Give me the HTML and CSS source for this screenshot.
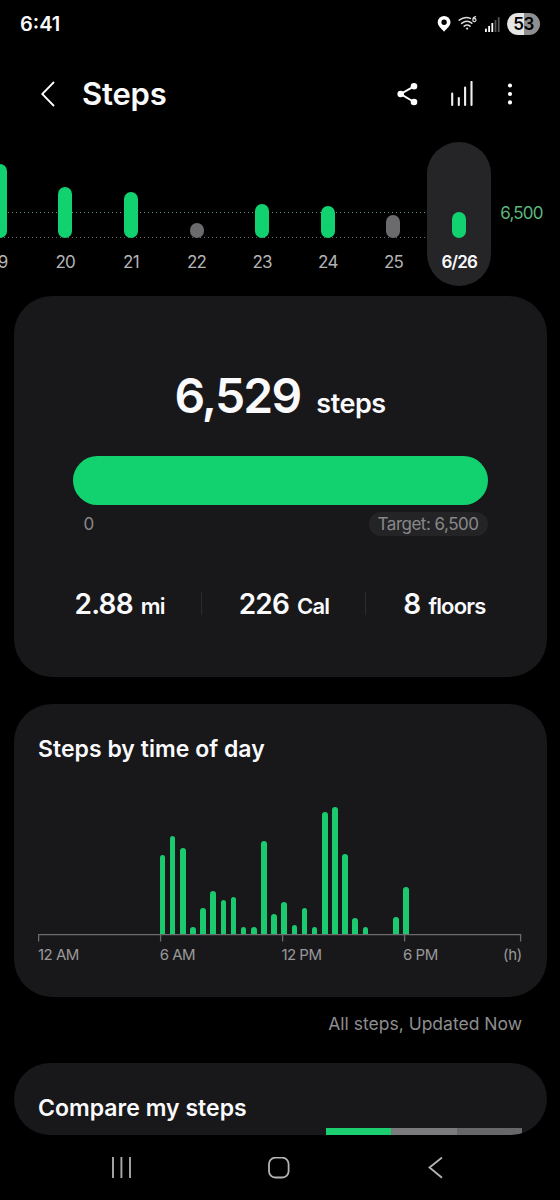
FILE: index.html
```html
<!DOCTYPE html>
<html lang="en">
    <head>
        <meta charset="UTF-8" />
        <meta name="viewport" content="width=device-width, initial-scale=1.0" />
        <title>Steps</title>
        <link rel="stylesheet" href="styles.css">
    </head>
    <body>
        <div class="status">
            <span class="clock">6:41</span>
            <svg class="status-icons" width="64" height="20" viewBox="0 0 64 20">
                <path fill="#fff" fill-rule="evenodd" d="M7.1 1.9a6.4 6.4 0 0 0-6.4 6.4c0 3.6 3.2 5.6 6.4 9.5 3.2-3.9 6.4-5.9 6.4-9.5a6.4 6.4 0 0 0-6.4-6.4zm0 3.6a2.7 2.7 0 1 1 0 5.4 2.7 2.7 0 0 1 0-5.4z" />
                <g fill="none" stroke="#ddd" stroke-width="1.5" stroke-linecap="round">
                    <path d="M22.2 6.2q5.6-4.4 11.2 -1.8" />
                    <path d="M24.6 9.4q5.4-4.2 10.2-.2" />
                    <path d="M27.2 12.2q3-2.2 5.8 0" />
                    <path d="M38.6 2.6q-2.8.6-2.8 3.4a1.6 1.7 0 1 0 1.6-1.7q-1 .1-1.5 1" stroke-width="1.2" />
                </g>
                <circle cx="30.1" cy="14.6" r="1.1" fill="#ddd" />
                <g fill="#fff">
                    <rect x="48" y="14.7" width="1.8" height="3.3" />
                    <rect x="51.2" y="12" width="1.8" height="6" />
                    <rect x="54.4" y="9" width="1.8" height="9" />
                    <rect x="57.6" y="6" width="1.8" height="12" fill="#555" />
                    <rect x="60.8" y="3.2" width="1.8" height="14.8" fill="#555" />
                </g>
            </svg>
            <span class="battery">53</span>
        </div>

        <div class="header">
            <svg class="back" width="14" height="26" viewBox="0 0 14 26">
                <path d="M13 1L1.2 13 13 25" fill="none" stroke="#fff" stroke-width="1.8" />
            </svg>
            <h1>Steps</h1>
            <svg width="22" height="24" viewBox="0 0 22 24">
                <path d="M17 4.4L3.7 12 17 20" fill="none" stroke="#fff" stroke-width="2" />
                <g fill="#fff">
                    <circle cx="17" cy="4.2" r="3.3" />
                    <circle cx="3.7" cy="12" r="3.3" />
                    <circle cx="17" cy="20" r="3.3" />
                </g>
            </svg>
            <svg class="trend" width="24" height="26" viewBox="0 0 24 26">
                <path d="M2.2 12.5v11.5M8.8 17v7M15.1 6.6v17.4M21.5 .9v23.1" stroke="#f0f0f0" stroke-width="2.1" stroke-linecap="round" />
            </svg>
            <svg class="more" width="6" height="24" viewBox="0 0 6 24">
                <g fill="#fff">
                    <circle cx="3" cy="3.5" r="2.1" />
                    <circle cx="3" cy="12" r="2.1" />
                    <circle cx="3" cy="20.4" r="2.1" />
                </g>
            </svg>
        </div>

        <div class="week">
            <div class="line goal"></div>
            <div class="line base"></div>
            <div class="days"></div>
            <span class="goal-label">6,500</span>
        </div>

        <div class="card summary">
            <div class="total"><b>6,529</b><span>steps</span></div>
            <div class="progress"></div>
            <div class="range">
                <span>0</span>
                <span class="target">Target: 6,500</span>
            </div>
            <ul class="stats">
                <li><b>2.88</b><span>mi</span></li>
                <li><b>226</b><span>Cal</span></li>
                <li><b>8</b><span>floors</span></li>
            </ul>
        </div>

        <div class="card time">
            <h2>Steps by time of day</h2>
            <div class="chart"></div>
            <svg class="axis" width="484" height="8" viewBox="0 0 484 8">
                <path d="M.6 7.5V.7H482.6V7.5M122.6 .7v6.8M244.6 .7v6.8M366.6 .7v6.8" fill="none" stroke="#6c6c6e" stroke-width="1.3" />
            </svg>
            <div class="hours">
                <span>12 AM</span>
                <span>6 AM</span>
                <span>12 PM</span>
                <span>6 PM</span>
                <em>(h)</em>
            </div>
        </div>
        <p class="updated">All steps, Updated Now</p>

        <div class="card compare">
            <h2>Compare my steps</h2>
            <div class="levels"><i></i><i></i><i></i></div>
        </div>

        <div class="nav">
            <svg width="22" height="22" viewBox="0 0 22 22">
                <path d="M3 0v21M11.4 0v21M20 0v21" stroke="#a9a9a9" stroke-width="1.9" />
            </svg>
            <svg width="22" height="22" viewBox="0 0 22 22">
                <rect x="1" y=".7" width="19.6" height="19.8" rx="6.2" fill="none" stroke="#b4b4b4" stroke-width="1.8" />
            </svg>
            <svg width="22" height="22" viewBox="0 0 22 22">
                <path d="M17 .5L4.5 10.5 17 20.8" fill="none" stroke="#b4b4b4" stroke-width="1.8" />
            </svg>
        </div>

        <script>
            // [label, bar height, goal reached]
            let days = [
                ["19", 74, true],
                ["20", 51, true],
                ["21", 46, true],
                ["22", 15, false],
                ["23", 34, true],
                ["24", 32, true],
                ["25", 23, false],
                ["6/26", 26, true]
            ]
            let week = document.querySelector(".days")
            days.forEach((d, i) => {
                let day = document.createElement("div")
                day.className = "day" + (d[2] ? "" : " missed") + (i === days.length - 1 ? " selected" : "")
                day.innerHTML = `<i style="height: ${d[1]}px"></i><span>${d[0]}</span>`
                week.appendChild(day)
            })

            // one bar per half hour, starting at midnight
            let steps = [
                0, 0, 0, 0, 0, 0, 0, 0, 0, 0, 0, 0,
                79, 98, 86, 7.5, 26.5, 43, 34, 37, 7.5, 7.5, 93, 20.5,
                32, 9, 26, 7.5, 122, 127, 80, 16, 7.5, 0, 0, 17,
                47
            ]
            let chart = document.querySelector(".chart")
            steps.forEach(h => {
                let bar = document.createElement("i")
                bar.style.height = h + "px"
                chart.appendChild(bar)
            })
        </script>
    </body>
</html>
```
FILE: styles.css
```css
* {
    margin: 0;
    padding: 0;
    box-sizing: border-box;
}
body {
    width: 560px;
    height: 1200px;
    overflow: hidden;
    background: #000;
    color: #fafafc;
    font-family: Inter, "Liberation Sans", sans-serif;
}
svg {
    display: block;
    flex: none;
}
h2 {
    font-size: 23px;
    font-weight: 600;
    line-height: 28px;
    letter-spacing: 0.03px;
    white-space: nowrap;
}
.status {
    height: 48px;
    display: flex;
    align-items: center;
    padding: 0 20px 0 20px;
}
.clock {
    flex: 1;
    font-size: 20px;
    font-weight: 600;
    letter-spacing: 0;
}
.status-icons {
    margin: -1px 6px 0 0;
}
.battery {
    width: 33px;
    height: 22px;
    border-radius: 11px;
    background: linear-gradient(90deg, #e6e6e6 53%, #8f8f8f 53%);
    color: #000;
    font-size: 17px;
    font-weight: 600;
    line-height: 22px;
    text-align: center;
    letter-spacing: -0.6px;
}
.header {
    height: 92px;
    display: flex;
    align-items: center;
    padding: 0 47px 0 41px;
}
.header h1 {
    flex: 1;
    margin: -1px 0 0 27px;
    font-size: 31px;
    font-weight: 600;
    letter-spacing: -0.2px;
}
.trend {
    margin: 0 33px 0 31px;
}
.week {
    position: relative;
    height: 156px;
    display: flex;
    padding-top: 2px;
}
.line {
    position: absolute;
    left: 0;
    width: 426px;
    height: 1px;
    background: repeating-linear-gradient(90deg, #6c9a72 0 1.5px, transparent 1.5px 4px);
}
.goal {
    top: 72px;
}
.base {
    top: 97px;
    background: repeating-linear-gradient(90deg, #666 0 1.5px, transparent 1.5px 4px);
}
.days {
    position: relative;
    flex: none;
    display: flex;
    height: 144px;
    margin-left: -33.2px;
}
.day {
    width: 65.65px;
    display: flex;
    flex-direction: column;
    align-items: center;
    justify-content: flex-end;
    padding-bottom: 13px;
    color: #b4b4b6;
    font-size: 17px;
    line-height: 22px;
    letter-spacing: -0.8px;
}
.day i {
    width: 14px;
    margin-bottom: 13px;
    border-radius: 7px;
    background: #12d16f;
}
.missed i {
    background: #6b6b6d;
}
.selected {
    width: 64px;
    margin-left: 1px;
    border-radius: 32px;
    background: #252528;
    color: #fafafc;
    font-weight: 600;
}
.goal-label {
    margin: 60px 0 0 9px;
    color: #5cb67c;
    font-size: 17px;
    line-height: 22px;
    letter-spacing: -0.8px;
}
.card {
    width: 533px;
    margin: 0 auto;
    border-radius: 38px;
    background: #18181a;
    overflow: hidden;
}
.summary {
    height: 381px;
    padding: 73px 59px 0;
}
.total {
    height: 54px;
    display: flex;
    justify-content: center;
    align-items: baseline;
    gap: 16px;
    line-height: 54px;
}
.total b {
    font-size: 48px;
    font-weight: 600;
    letter-spacing: -1.8px;
}
.total span {
    font-size: 27px;
    font-weight: 600;
    letter-spacing: -0.5px;
}
.progress {
    height: 49px;
    margin-top: 32.5px;
    border-radius: 25px;
    background: #12d16f;
}
.range {
    display: flex;
    justify-content: space-between;
    margin-top: 7px;
    padding-left: 11px;
    color: #88888a;
    font-size: 17px;
    line-height: 24px;
    letter-spacing: -0.5px;
}
.target {
    padding: 0 9px;
    border-radius: 12px;
    background: #242426;
}
.stats {
    display: flex;
    justify-content: space-between;
    margin-top: 52px;
    padding: 0 2px;
    list-style: none;
    white-space: nowrap;
}
.stats li {
    display: flex;
    align-items: baseline;
    gap: 8px;
    height: 32px;
    line-height: 32px;
}
.stats li + li::before {
    content: "";
    align-self: center;
    width: 1px;
    height: 23px;
    margin-right: 29px;
    background: #2b2b2d;
}
.stats b {
    font-size: 28px;
    font-weight: 600;
    letter-spacing: -0.8px;
}
.stats span {
    font-size: 22px;
    font-weight: 600;
    letter-spacing: -0.8px;
}
.time {
    height: 293px;
    margin-top: 27px;
    padding: 31px 24.5px 0;
}
.chart {
    height: 171px;
    display: flex;
    align-items: flex-end;
    gap: 4.56px;
}
.chart i {
    flex: none;
    width: 5.6px;
    border-radius: 3px 3px 0 0;
    background: #1bc96f;
}
.hours {
    display: flex;
    margin-top: 3px;
    color: #98989a;
    font-size: 15px;
    line-height: 20px;
    letter-spacing: -0.5px;
}
.hours span {
    flex: none;
    width: 121.7px;
}
.hours span:nth-child(4) {
    width: auto;
}
.hours em {
    margin-left: auto;
    font-style: normal;
    letter-spacing: -0.3px;
}
.updated {
    height: 66px;
    padding: 16px 38px 0 0;
    color: #8e8e90;
    font-size: 17.5px;
    line-height: 22px;
    text-align: right;
}
.compare {
    height: 71.5px;
    padding: 31px 24.5px 0;
}
.levels {
    display: flex;
    width: 196px;
    height: 7px;
    margin: 6px 0 0 auto;
}
.levels i {
    flex: 1;
    background: #7b7a7d;
}
.levels i:first-child {
    background: #1bce70;
}
.levels i:last-child {
    background: #676669;
}
.nav {
    display: flex;
    justify-content: space-between;
    padding: 22px 113px 0 110px;
}
```
